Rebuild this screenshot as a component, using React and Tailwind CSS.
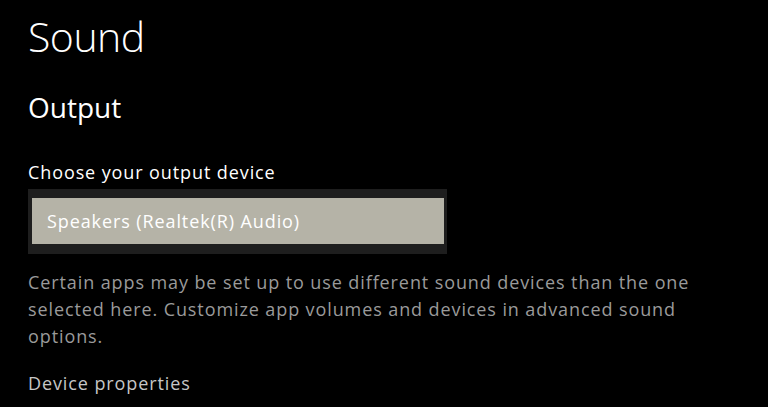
export default function App() {
  return (
    <div className="w-[768px] h-[407px] bg-black overflow-hidden pl-[28px] pt-[12px]" style={{ fontFamily: '"Open Sans", "Noto Sans", sans-serif' }}>
      <div className="text-[41px] leading-[48px] font-light text-white tracking-[-0.5px]">Sound</div>
      <div className="mt-[29px] text-[28px] leading-[36px] text-white font-normal">Output</div>
      <div className="mt-[35px] text-[18px] leading-[24px] tracking-[0.9px] text-white">Choose your output device</div>
      <div className="mt-[5px] w-[419px] bg-[#1e1e1e] pt-[9px] pb-[10px] pl-[4px] pr-[3px]">
        <div className="h-[46px] bg-[#b5b3a7] pl-[15px] flex items-center text-[18px] tracking-[0.9px] text-white">Speakers (Realtek(R) Audio)</div>
      </div>
      <div className="mt-[15px] text-[18px] leading-[27px] tracking-[0.9px] text-[#9a9a9a] whitespace-nowrap">
        Certain apps may be set up to use different sound devices than the one<br />
        selected here. Customize app volumes and devices in advanced sound<br />
        options.
      </div>
      <div className="mt-[21px] text-[18px] leading-[24px] tracking-[0.9px] text-[#c6c6c6]">Device properties</div>
    </div>
  );
}
